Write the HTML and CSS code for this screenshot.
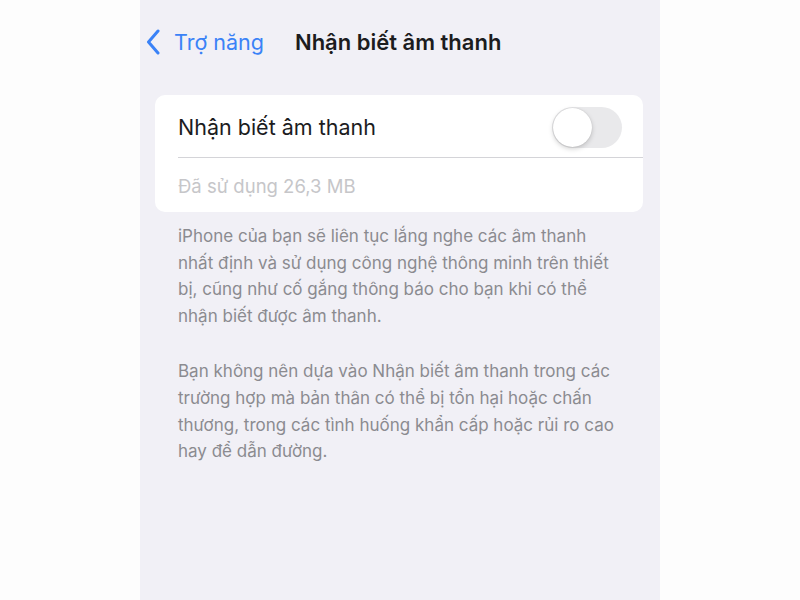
FILE: index.html
```html
<!DOCTYPE html>
<html lang="vi">
<head>
  <meta charset="UTF-8">
  <meta name="viewport" content="width=device-width, initial-scale=1.0">
  <title>Nhận biết âm thanh</title>
  <link rel="stylesheet" href="styles.css">
</head>
<body>
  <div class="screen">
    <div class="nav-bar">
      <a class="back" href="#">
        <svg class="chevron" width="14" height="26" viewBox="0 0 14 26">
          <path d="M12 2 L2.5 13 L12 24" fill="none" stroke="#3a82f7" stroke-width="3" stroke-linecap="round" stroke-linejoin="round"/>
        </svg>
        <span>Trợ năng</span>
      </a>
      <div class="nav-title">Nhận biết âm thanh</div>
    </div>

    <div class="group">
      <div class="row">
        <span class="row-label">Nhận biết âm thanh</span>
        <div class="switch"><div class="knob"></div></div>
      </div>
      <div class="row row-sub">
        <span class="row-detail">Đã sử dụng 26,3 MB</span>
      </div>
    </div>

    <div class="footer-text">
      <p>iPhone của bạn sẽ liên tục lắng nghe các âm thanh nhất định và sử dụng công nghệ thông minh trên thiết bị, cũng như cố gắng thông báo cho bạn khi có thể nhận biết được âm thanh.</p>
      <p>Bạn không nên dựa vào Nhận biết âm thanh trong các trường hợp mà bản thân có thể bị tổn hại hoặc chấn thương, trong các tình huống khẩn cấp hoặc rủi ro cao hay để dẫn đường.</p>
    </div>
  </div>
</body>
</html>
```

FILE: styles.css
```css
* {
  margin: 0;
  padding: 0;
  box-sizing: border-box;
}
body {
  font-family: Inter, "Noto Sans", sans-serif;
  background: #fdfdfd;
  display: flex;
  justify-content: center;
  height: 100vh;
  overflow: hidden;
}
.screen {
  width: 520px;
  height: 600px;
  background: #f1f0f6;
}
.nav-bar {
  height: 95px;
  display: flex;
  align-items: flex-start;
  padding-top: 29px;
  padding-left: 6px;
}
.back {
  display: flex;
  align-items: center;
  gap: 14px;
  color: #3a82f7;
  text-decoration: none;
  font-size: 21.5px;
  height: 26px;
}
.back span {
  line-height: 26px;
}
.nav-title {
  margin-left: 31px;
  font-size: 22px;
  font-weight: 600;
  color: #1c1c1e;
  height: 26px;
  line-height: 26px;
}
.group {
  margin: 0 17px 0 15px;
  background: #fff;
  border-radius: 10px;
  padding-left: 23px;
}
.row {
  display: flex;
  align-items: center;
  justify-content: space-between;
  height: 63px;
  padding-right: 21px;
  padding-top: 2px;
  border-bottom: 1.5px solid #d4d4d8;
}
.row-sub {
  height: 54px;
  border-bottom: none;
}
.row-label {
  font-size: 21.5px;
  color: #1c1c1e;
}
.row-detail {
  font-size: 18.5px;
  color: #c6c6c9;
}
.switch {
  width: 70px;
  height: 41px;
  border-radius: 21px;
  background: #e9e9eb;
  padding: 1px;
}
.knob {
  width: 39px;
  height: 39px;
  border-radius: 50%;
  background: #fff;
  box-shadow: 0 2px 5px rgba(0, 0, 0, 0.18), 0 0 1px rgba(0, 0, 0, 0.2);
}
.footer-text {
  padding: 11px 40px 0 38px;
  color: #8b8b90;
  font-size: 17px;
  line-height: 26.6px;
}
.footer-text p {
  margin-bottom: 29px;
}
```
